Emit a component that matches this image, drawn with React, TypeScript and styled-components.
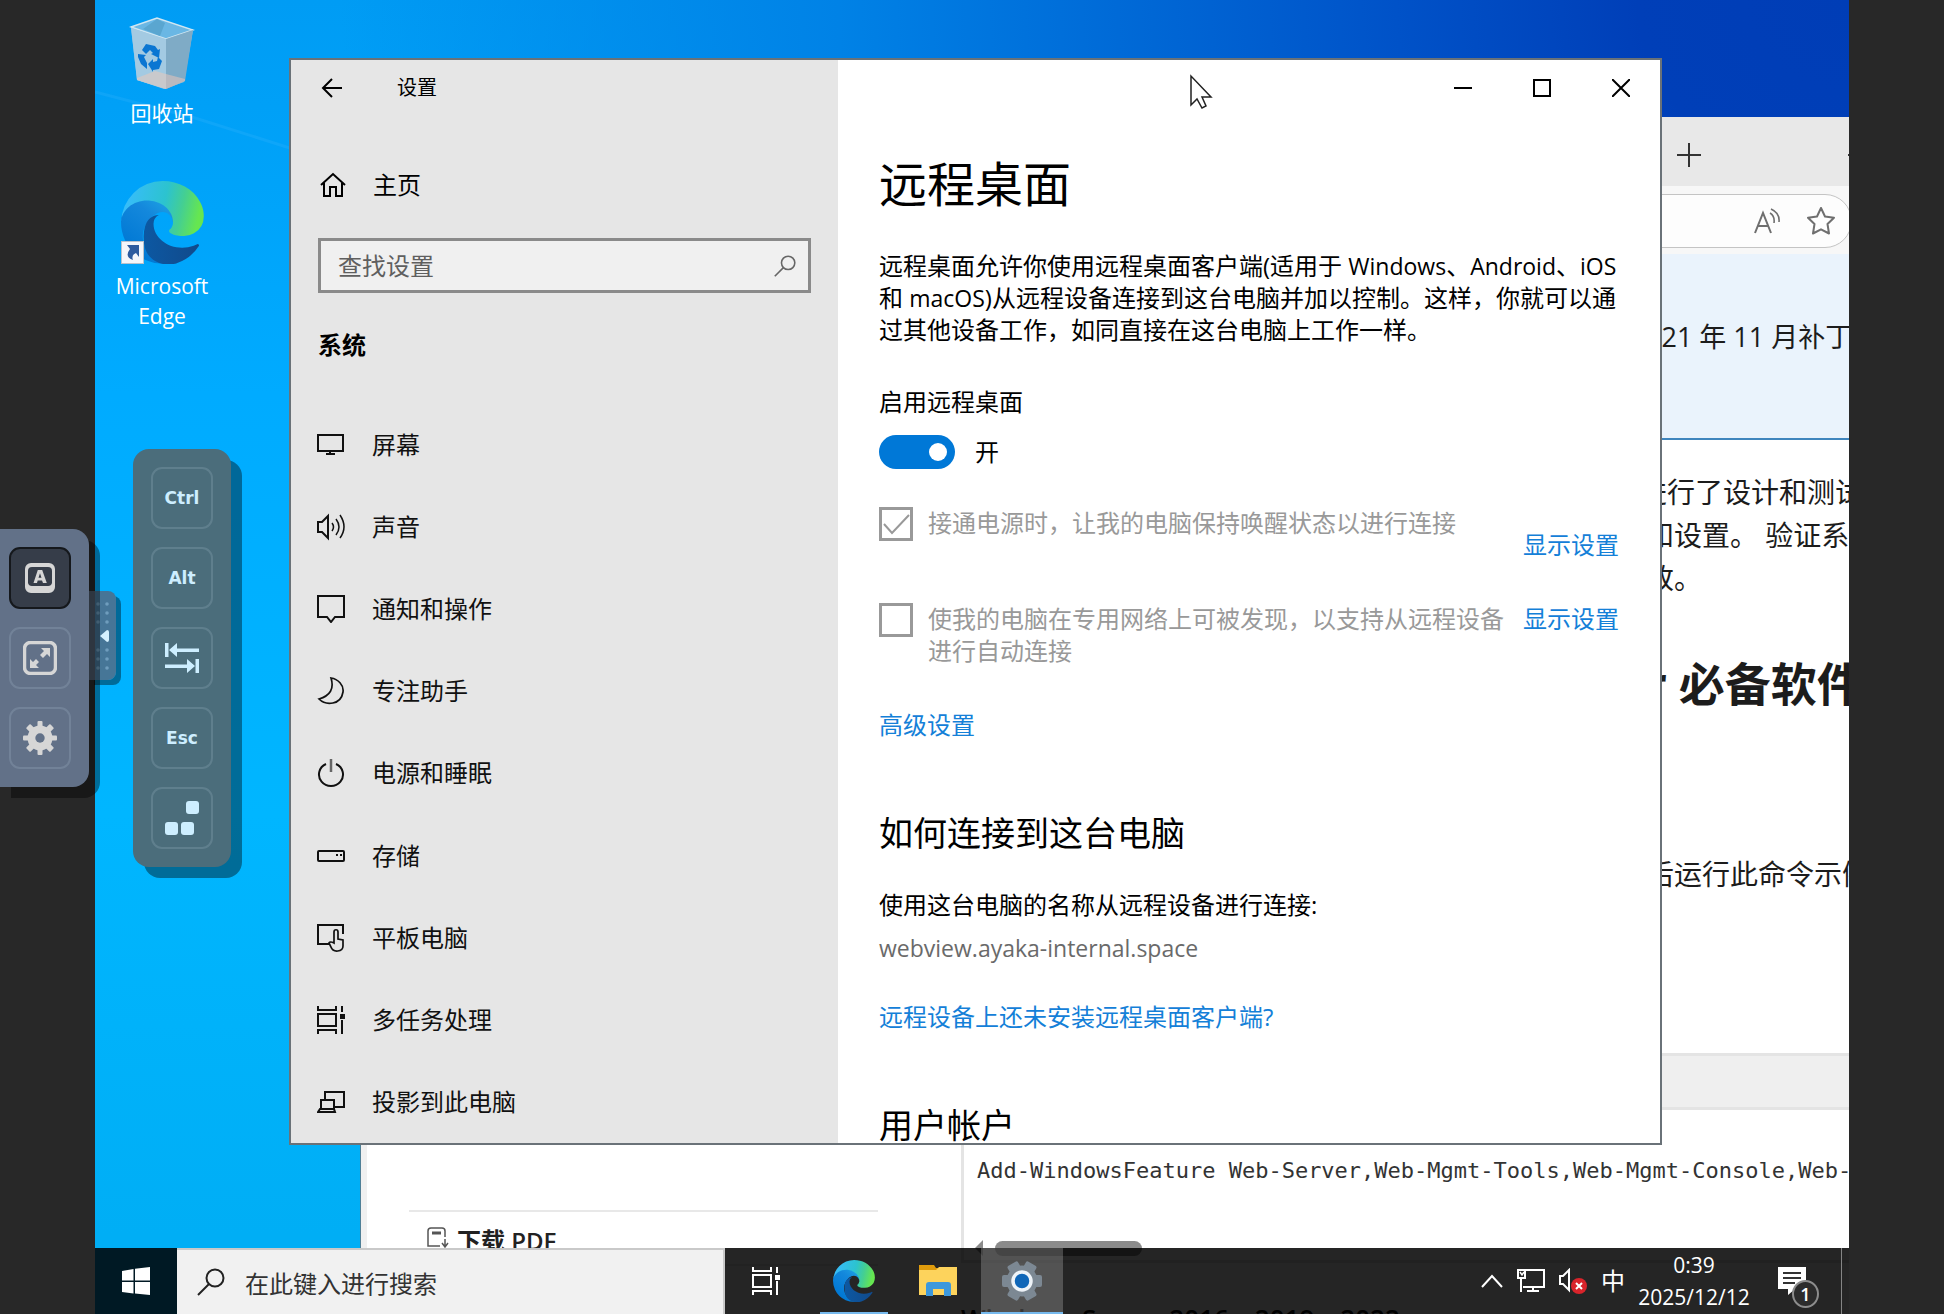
import React, { useId } from "react";
import styled, { createGlobalStyle, css } from "styled-components";

const uiFont = `"Open Sans", "Noto Sans CJK SC", sans-serif`;
const shadow = "rgba(0, 0, 0, 0.4)";

const GlobalStyle = createGlobalStyle`
  *, *::before, *::after { box-sizing: border-box; }
  body { margin: 0; background: #282828; font-family: ${uiFont}; }
  h1, h2, h3, p, ul { margin: 0; padding: 0; font-weight: 400; }
  ul { list-style: none; }
  button, input { font: inherit; color: inherit; margin: 0; }
  a { text-decoration: none; }
`;

/* ---------- Viewer shell ---------- */

const Viewer = styled.div`
  position: relative;
  display: flex;
  height: 100vh;
  padding: 0 95px;
  background: #282828;
  overflow: hidden;
`;

const Desktop = styled.main`
  position: relative;
  flex: 1;
  min-width: 0;
  overflow: hidden;
  background:
    radial-gradient(86% 100% at 100% 0, #003db6 0%, #003fb8 14%, #0052c8 30%, #0082e6 67%, rgba(0, 150, 240, 0) 100%),
    linear-gradient(180deg, #009cf4 0%, #00abff 30%, #00b6ff 62%, #00aef5 94%);
`;

const LightRay = styled.svg`
  position: absolute;
  left: 0;
  top: 80px;
`;

/* ---------- Desktop icons ---------- */

const Shortcuts = styled.ul`
  display: flex;
  flex-direction: column;
  gap: 53px;
  width: 134px;
  padding-top: 17px;
  position: relative;
`;

const Shortcut = styled.a`
  display: flex;
  flex-direction: column;
  align-items: center;
  gap: 7px;
  color: #fff;
  font-size: 21px;
  line-height: 30px;
  text-align: center;
`;

const ShortcutArt = styled.span`
  position: relative;
  display: block;
  line-height: 0;
`;

const ShortcutBadge = styled.svg`
  position: absolute;
  left: 0;
  bottom: 0;
`;

/* ---------- Remote control bars ---------- */

const ControlBar = styled.nav`
  position: absolute;
  left: 0;
  top: 50%;
  transform: translateY(-50%);
  display: flex;
  align-items: flex-start;
  padding-top: 2px;
  z-index: 5;
`;

const ControlPanel = styled.div`
  position: relative;
  z-index: 1;
  display: flex;
  flex-direction: column;
  gap: 18px;
  padding: 18px 18px 18px 9px;
  border-radius: 0 16px 16px 0;
  background: #627188;
  box-shadow: 11px 11px 0 ${shadow};
`;

const Handle = styled.button`
  display: flex;
  align-items: center;
  justify-content: center;
  width: 27px;
  height: 89px;
  margin-top: 62px;
  padding: 0;
  border: 0;
  border-radius: 0 8px 8px 0;
  background: rgba(88, 102, 125, 0.8);
  box-shadow: 5px 5px 0 ${shadow};
`;

const KeyPanel = styled.section`
  position: absolute;
  left: 133px;
  top: calc(50% + 1px);
  transform: translateY(-50%);
  display: flex;
  flex-direction: column;
  gap: 18px;
  padding: 18px;
  border-radius: 16px;
  background: #4b6d7b;
  box-shadow: 11px 11px 0 ${shadow};
  z-index: 4;
`;

const PadButton = styled.button<{ $active?: boolean }>`
  display: flex;
  align-items: center;
  justify-content: center;
  width: 62px;
  height: 62px;
  padding: 0;
  border: 2px solid rgba(190, 210, 225, 0.18);
  border-radius: 11px;
  background: transparent;
  color: #cdeeff;
  font: bold 17px "DejaVu Sans", sans-serif;
  ${(p) =>
    p.$active &&
    css`
      background: #363d49;
      border-color: #15181c;
    `}
`;

/* ---------- Browser window ---------- */

const BrowserWindow = styled.section`
  position: absolute;
  left: 265px;
  right: -60px;
  top: 117px;
  bottom: 0;
  display: flex;
  flex-direction: column;
  overflow: hidden;
  background: #fff;
  border-left: 1px solid #4f7f96;
`;

const TabStrip = styled.div`
  display: flex;
  align-items: center;
  justify-content: flex-end;
  gap: 147px;
  height: 69px;
  padding: 6px 44px 0 0;
  background: #e8e8e8;
  color: #333;
`;

const BareButton = styled.button`
  display: flex;
  align-items: center;
  justify-content: center;
  padding: 0;
  border: 0;
  background: none;
`;

const BrowserToolbar = styled.div`
  height: 68px;
  padding: 8px 57px 6px 60px;
  background: #f7f7f7;
`;

const AddressBar = styled.div`
  display: flex;
  align-items: center;
  justify-content: flex-end;
  gap: 26px;
  height: 54px;
  padding-right: 16px;
  border: 1px solid #c4c4c4;
  border-radius: 27px;
  background: #fdfdfd;
`;

const PageBody = styled.div`
  flex: 1;
  display: flex;
  min-height: 0;
  border-left: 6px solid #f0f0f0;
`;

const Contents = styled.aside`
  display: flex;
  flex-direction: column;
  justify-content: flex-end;
  width: 594px;
  padding: 0 83px 48px 42px;
`;

const DownloadRow = styled.a`
  display: flex;
  align-items: flex-start;
  gap: 8px;
  height: 56px;
  padding: 12px 0 0 18px;
  border-top: 2px solid #e8e8e8;
  border-bottom: 2px solid #e8e8e8;
  color: #222;
  font-size: 24px;
  line-height: 34px;
  font-weight: 600;
  svg {
    margin-top: 3px;
  }
`;

const Article = styled.article`
  flex: 1;
  min-width: 0;
  color: #1c1c1c;
  font-size: 28px;
  line-height: 43px;
  white-space: nowrap;
`;

const Notice = styled.div`
  display: flex;
  align-items: center;
  height: 186px;
  padding: 0 0 20px 685px;
  border-bottom: 2px solid #3f85bd;
  background: #eaf3fc;
  font-size: 27px;
`;

const Prose = styled.div`
  display: flex;
  flex-direction: column;
  height: 613px;
  padding: 31px 0 0 678px;
`;

const Indented = styled.div`
  padding-left: 7px;
`;

const ProseHeading = styled.h2`
  margin: 53px 0 140px;
  font-size: 46px;
  line-height: 60px;
  font-weight: 700;
`;

const CodeHeader = styled.div`
  height: 57px;
  border: 3px solid #e4e4e4;
  background: #efefef;
`;

const CodeBlock = styled.div`
  display: flex;
  flex-direction: column;
  justify-content: space-between;
  height: 153px;
  padding: 44px 0 4px;
  border: solid #e4e4e4;
  border-width: 0 0 3px 3px;
`;

const Code = styled.code`
  padding-left: 13px;
  font: 22px/34px "DejaVu Sans Mono", monospace;
  color: #333;
`;

const ScrollTrack = styled.div`
  display: flex;
  align-items: center;
  gap: 11px;
  padding-left: 11px;
`;

const ScrollThumb = styled.div`
  width: 147px;
  height: 15px;
  border-radius: 8px;
  background: #8b8b8b;
`;

const CaptionText = styled.h3`
  padding-top: 34px;
  font-size: 26px;
  line-height: 43px;
  font-weight: 600;
  color: #000;
`;

/* ---------- Settings window ---------- */

const SettingsWindow = styled.section`
  position: absolute;
  left: 194px;
  right: 187px;
  top: 58px;
  bottom: 169px;
  display: grid;
  grid-template-columns: 547px minmax(0, 1fr);
  overflow: hidden;
  border: 2px solid #6a7278;
  background: #fff;
  color: #000;
  font-size: 24px;
  line-height: 32px;
`;

const Sidebar = styled.aside`
  display: flex;
  flex-direction: column;
  min-height: 0;
  background: #e6e6e6;
`;

const SidebarTitle = styled.header`
  display: flex;
  align-items: center;
  gap: 54px;
  height: 56px;
  padding: 0 30px;
  font-size: 20px;
`;

const HomeLink = styled.a`
  display: flex;
  align-items: center;
  gap: 27px;
  height: 50px;
  margin-top: 44px;
  padding: 0 29px;
  color: inherit;
`;

const SettingSearch = styled.label`
  display: flex;
  align-items: center;
  justify-content: space-between;
  height: 55px;
  margin: 28px 27px 0;
  padding: 0 12px 0 17px;
  border: 3px solid #8a8a8a;
  background: #f0f0f0;
`;

const PlainInput = styled.input`
  flex: 1;
  min-width: 0;
  padding: 0;
  border: 0;
  outline: 0;
  background: transparent;
  line-height: 32px;
  &::placeholder {
    color: #5f5f5f;
    opacity: 1;
  }
`;

const GroupTitle = styled.h2`
  padding: 36px 27px 43px;
  font-size: 24px;
  line-height: 32px;
  font-weight: 700;
`;

const NavList = styled.ul`
  flex: 1;
  display: flex;
  flex-direction: column;
  min-height: 0;
`;

const NavItem = styled.li`
  flex: 1;
  display: flex;
`;

const NavLink = styled.a`
  flex: 1;
  display: flex;
  align-items: center;
  gap: 27px;
  padding: 0 26px;
  color: #111;
`;

const Content = styled.div`
  display: flex;
  flex-direction: column;
  min-height: 0;
  overflow: hidden;
`;

const WindowButtons = styled.div`
  display: flex;
  justify-content: flex-end;
  height: 56px;
  flex: none;
`;

const WindowButton = styled(BareButton)`
  width: 79px;
  height: 56px;
`;

const Pane = styled.div`
  display: flex;
  flex-direction: column;
  align-items: flex-start;
  padding: 0 38px 0 41px;
`;

const PageTitle = styled.h1`
  padding-top: 36px;
  font-size: 48px;
  line-height: 64px;
`;

const Description = styled.p`
  margin-top: 34px;
  white-space: nowrap;
`;

const Latin = styled.span`
  font-size: 23px;
`;

const FieldLabel = styled.label`
  margin-top: 40px;
`;

const ToggleRow = styled.div`
  display: flex;
  align-items: center;
  gap: 20px;
  height: 36px;
  margin-top: 16px;
`;

const Toggle = styled.input`
  appearance: none;
  position: relative;
  width: 76px;
  height: 34px;
  border-radius: 17px;
  background: #0078d7;
  &::after {
    content: "";
    position: absolute;
    right: 8px;
    top: 8px;
    width: 18px;
    height: 18px;
    border-radius: 50%;
    background: #fff;
  }
`;

const OptionGrid = styled.div`
  display: grid;
  grid-template-columns: 34px 595px auto;
  grid-auto-rows: 96px;
  column-gap: 15px;
  align-items: start;
  margin-top: 37px;
`;

const OptionLabel = styled.label`
  width: 580px;
  color: #999;
`;

const CheckCell = styled.span`
  display: grid;
  width: 34px;
  height: 34px;
  > * {
    grid-area: 1 / 1;
  }
`;

const CheckBox = styled.input`
  appearance: none;
  width: 34px;
  height: 34px;
  border: 3px solid #999;
  background: #fff;
`;

const TextLink = styled.a`
  color: #1480d8;
`;

const OptionLink = styled(TextLink)<{ $low?: boolean }>`
  margin-left: -15px;
  padding-top: ${(p) => (p.$low ? "22px" : "0")};
`;

const SectionTitle = styled.h2`
  margin-top: 69px;
  font-size: 34px;
  line-height: 46px;
`;

const AdvancedLink = styled(TextLink)`
  margin-top: 10px;
`;

const HostPrompt = styled.p`
  margin-top: 33px;
`;

const HostName = styled.p`
  margin-top: 11px;
  color: #6a6a6a;
`;

const ClientLink = styled(TextLink)`
  margin-top: 37px;
`;

const Pointer = styled.svg`
  position: absolute;
  left: calc(62% + 7px);
  top: 74px;
`;

/* ---------- Taskbar ---------- */

const Taskbar = styled.footer`
  position: absolute;
  left: 0;
  right: 0;
  bottom: 0;
  display: flex;
  height: 66px;
  background: rgba(0, 0, 0, 0.855);
  color: #fff;
`;

const TaskButton = styled(BareButton)<{ $open?: boolean; $focused?: boolean }>`
  position: relative;
  width: 82px;
  height: 66px;
  background: ${(p) => (p.$focused ? "rgba(255, 255, 255, 0.21)" : "transparent")};
  ${(p) =>
    p.$open &&
    css`
      &::after {
        content: "";
        position: absolute;
        bottom: 0;
        left: ${p.$focused ? "0" : "7px"};
        right: ${p.$focused ? "0" : "7px"};
        height: 2px;
        background: #76b9ed;
      }
    `}
`;

const TaskSearch = styled.label`
  display: flex;
  align-items: center;
  gap: 20px;
  width: 548px;
  padding: 4px 20px 0;
  border: solid #c9c9c9;
  border-width: 2px 2px 0 0;
  background: #f1f1f1;
  color: #222;
  font-size: 24px;
  svg {
    margin-bottom: 4px;
  }
  ${PlainInput}::placeholder {
    color: #333;
  }
`;

const Apps = styled.div`
  display: flex;
  gap: 2px;
  margin-left: 6px;
`;

const Tray = styled.div`
  display: flex;
  align-items: center;
  margin-left: auto;
`;

const TrayIcons = styled.div`
  display: flex;
  align-items: center;
  gap: 14px;
  font-size: 24px;
  line-height: 32px;
`;

const Clock = styled.time`
  width: 138px;
  font-size: 21px;
  line-height: 32px;
  text-align: center;
`;

const Notifications = styled(BareButton)`
  position: relative;
  justify-content: flex-start;
  width: 78px;
  height: 66px;
  padding-left: 15px;
`;

const Count = styled.span`
  position: absolute;
  left: 29px;
  top: 32px;
  width: 27px;
  height: 28px;
  border: 2px solid #8d8d8d;
  border-radius: 50%;
  background: #2c2c2c;
  font-size: 18px;
  line-height: 24px;
  font-weight: 600;
`;

const ShowDesktop = styled(BareButton)`
  width: 8px;
  height: 66px;
  border-left: 1px solid #858585;
`;

/* ---------- Drawings ---------- */

const EdgeLogo = ({ w, h }: { w: number; h: number }) => {
  const id = useId().replace(/[^a-zA-Z0-9]/g, "");
  return (
    <svg width={w} height={h} viewBox="0 0 257 257" preserveAspectRatio="none">
      <defs>
        <linearGradient id={id + "a"} x1="60" y1="180" x2="240" y2="180" gradientUnits="userSpaceOnUse">
          <stop offset="0" stopColor="#0c59a4" />
          <stop offset="1" stopColor="#114a8b" />
        </linearGradient>
        <linearGradient id={id + "b"} x1="150" y1="80" x2="40" y2="220" gradientUnits="userSpaceOnUse">
          <stop offset="0" stopColor="#1b9de2" />
          <stop offset="0.3" stopColor="#1488dc" />
          <stop offset="1" stopColor="#0078d4" />
        </linearGradient>
        <linearGradient id={id + "c"} x1="20" y1="60" x2="240" y2="110" gradientUnits="userSpaceOnUse">
          <stop offset="0" stopColor="#37bdf8" />
          <stop offset="0.5" stopColor="#2cc3cf" />
          <stop offset="0.75" stopColor="#44cf92" />
          <stop offset="1" stopColor="#66e650" />
        </linearGradient>
      </defs>
      <path fill={`url(#${id}b)`} d="M105.7 241.4a79.2 79.2 0 01-22.7-21.4 80.7 80.7 0 0129.5-120c3.2-1.5 8.5-4.1 15.6-4a32.4 32.4 0 0125.7 13 31.9 31.9 0 016.3 18.7c0-.2 24.5-79.6-80-79.6-43.9 0-80 41.7-80 78.2a130.2 130.2 0 0012.1 56 128 128 0 00156.4 67 75.5 75.5 0 01-62.8-8z" />
      <path fill={`url(#${id}a)`} d="M235.7 195.5a93.7 93.7 0 01-10.6 4.7 101.9 101.9 0 01-35.9 6.4c-47.3 0-88.5-32.5-88.5-74.3a31.5 31.5 0 0116.4-27.3c-42.8 1.8-46.8 46.4-46.8 72.5 0 73.9 61.1 81.4 75.8 81.4 7.9 0 19.8-2.3 27-4.6l1.3-.4a128.3 128.3 0 0066.6-52.8 4 4 0 00-5.3-5.6z" />
      <path fill={`url(#${id}c)`} d="M152.3 148.9c-.9 1-3.4 2.5-3.4 5.6 0 2.6 1.7 5.2 4.8 7.3 14.4 10.1 41.7 8.7 41.8 8.7a59.6 59.6 0 0030.4-8.4A61.8 61.8 0 00256.3 108.9c.3-22.4-8-37.3-11.3-43.9C223.9 23.9 178.6 0 129.1 0A128 128 0 001 126.2c.5-36.5 36.8-66 80-66 3.5 0 23.5.3 42 10a72.6 72.6 0 0130.9 29.3c6.1 10.6 7.2 24.1 7.2 29.4s-2.7 13.2-7.8 19.9z" />
    </svg>
  );
};

const RecycleBin = () => (
  <svg width="66" height="74" viewBox="0 0 66 74">
    <path d="M2 10L28 1l36 12-9 52-20 7-27-9z" fill="#8fc4e4" />
    <path d="M2 10L28 1l36 12-27 9z" fill="#6ab7e4" stroke="#cfe6f2" strokeWidth="1.5" />
    <path d="M14 12l14-10 8 4-5 13z" fill="#5aa6d0" />
    <path d="M2 11l35 11v50L8 63z" fill="#a3cae2" />
    <path d="M37 22l27-9-8 51-19 8z" fill="#7fabc6" />
    <path d="M8 61l18-7 11 3v15L8 63z" fill="#c9c9cc" />
    <path d="M37 57l19 5v2l-19 8z" fill="#b9b9bf" />
    <g fill="#0a76d2">
      <path d="M13 33l4-6 9 2 3 4 2-1-1 9-8-4 2-1-3-3-4 4z" />
      <path d="M9 37l8 1-2 2 3 6v6l-6-5-3-7z" />
      <path d="M19 47l5-5v3l4-1 1-4 4 4-3 8-6 1v2z" />
    </g>
  </svg>
);

const line = (w: number, h: number, children: React.ReactNode, sw = 2) => (
  <svg width={w} height={h} viewBox={`0 0 ${w} ${h}`} fill="none" stroke="currentColor" strokeWidth={sw}>
    {children}
  </svg>
);

const BackArrow = () => line(22, 22, <path d="M21 11H2M11 2L2 11l9 9" />);
const HomeIcon = () => line(26, 26, <path d="M1 13L13 2l12 11M4 11v13h6v-9h6v9h6V11" />);
const TaskViewIcon = () => (
  <svg width="28" height="28" viewBox="0 0 28 28" fill="none" stroke="currentColor" strokeWidth="2">
    <path d="M1 0v4h18V0M1 28v-4h18v4M1 8h18v12H1zM25 0v6M25 14v14" />
    <path d="M23 8h5v5h-5z" fill="currentColor" stroke="none" />
  </svg>
);

const navItems: { label: string; icon: React.ReactNode }[] = [
  {
    label: "屏幕",
    icon: line(28, 28, <path d="M1 4h25v16H1zM13 20v3M9 23h9" />),
  },
  {
    label: "声音",
    icon: line(28, 28, <>
      <path d="M1 9h4l6-6v22l-6-6H1z" />
      <path d="M15 10q3 4 0 8M19 6q6 8 0 16M23 2q8 12 0 23" strokeWidth="1.5" />
    </>),
  },
  {
    label: "通知和操作",
    icon: line(28, 28, <path d="M1 1h26v21h-9l-4 5-4-5H1z" />),
  },
  {
    label: "专注助手",
    icon: line(28, 28, <path d="M14 1q5 16-12 21c7 7 22 6 24-7 1-7-5-13-12-14z" strokeWidth="1.7" />),
  },
  {
    label: "电源和睡眠",
    icon: line(28, 28, <>
      <path d="M9 5a12 11.5 0 1 0 10 0" />
      <path d="M14 0v13" stroke="#666" strokeWidth="2.5" />
    </>),
  },
  {
    label: "存储",
    icon: line(28, 28, <>
      <rect x="1" y="9" width="26" height="10" rx="1" />
      <path d="M19 13h2M23 13h2" />
    </>),
  },
  {
    label: "平板电脑",
    icon: line(28, 28, <>
      <path d="M12 20H1V1h25v9" />
      <path d="M17 19V8c0-3 4-3 4 0v7l5 1v6c0 6-10 7-12 1l-2-4c1-2 3-1 5 0z" strokeWidth="1.7" />
    </>),
  },
  { label: "多任务处理", icon: <TaskViewIcon /> },
  {
    label: "投影到此电脑",
    icon: line(28, 28, <path d="M8 11V4h19v15H17M4 21V12h13v9M1 24h17l-1-3H3z" />),
  },
];

const Magnifier = ({ size, dark }: { size: number; dark?: boolean }) => (
  <svg width={size} height={size} viewBox="0 0 28 28" fill="none" stroke={dark ? "#222" : "#666"} strokeWidth="2">
    <circle cx="18" cy="10" r="8.5" />
    <path d="M12 16L1 27" />
  </svg>
);

const KeyboardA = () => (
  <svg width="30" height="30" viewBox="0 0 30 30">
    <path fillRule="evenodd" fill="#d6d6d6" d="M6 0h18a6 6 0 016 6v18a6 6 0 01-6 6H6a6 6 0 01-6-6V6a6 6 0 016-6zM7 4a4 4 0 00-4 4v12a4 4 0 004 3h16a4 4 0 004-3V8a4 4 0 00-4-4z" />
    <path fillRule="evenodd" fill="#d6d6d6" d="M12.800 7h4.400l4.600 13h-3.800l-1-2.600h-4.300L12 20H8.500zM15 10.200l-1.500 4.600h3z" />
  </svg>
);

const FullScreen = () => (
  <svg width="34" height="34" viewBox="0 0 34 34">
    <rect x="1.500" y="1.500" width="31" height="31" rx="6" fill="none" stroke="#d6d6d6" strokeWidth="3.500" />
    <path fill="#d6d6d6" d="M18 7h9v9l-3-3-4 4-3-3 4-4zM16 27H7v-9l3 3 3-3 3 3-3 3z" />
  </svg>
);

const Gear = () => (
  <svg width="34" height="34" viewBox="-17 -17 34 34">
    <g fill="#d6d6d6">
      {[0, 45, 90, 135].map((a) => (
        <rect key={a} x={a % 90 ? -3 : -2.5} y="-17" width={a % 90 ? 6 : 5} height="34" rx="1" transform={`rotate(${a})`} />
      ))}
      <circle r="12.500" />
    </g>
    <circle r="4.700" fill="#627188" />
  </svg>
);

const TabKeys = () => (
  <svg width="34" height="32" viewBox="0 0 34 32" fill="#cdeeff">
    <path d="M0 1h3.500v14H0zM4 8l8-7v5.500h22v3.500H12V15zM30.500 17H34v14h-3.500zM30 24l-8-7v5.500H0V26h22v5z" />
  </svg>
);

const ExtraKeys = () => (
  <svg width="34" height="34" viewBox="0 0 34 34" fill="#cdeeff">
    <rect x="21" y="0" width="13" height="13" rx="3" />
    <rect x="0" y="21" width="13" height="13" rx="3" />
    <rect x="16" y="21" width="13" height="13" rx="3" />
  </svg>
);

const HandleGrip = () => (
  <svg width="27" height="89" viewBox="0 0 27 89">
    {[13, 22, 31, 59, 68, 77].map((y) => (
      <g key={y} fill="#6f9dbd">
        <circle cx="9" cy={y} r="1.800" />
        <circle cx="18" cy={y} r="1.800" />
      </g>
    ))}
    <path d="M11 45l7-6q2 0 2 2v8q0 2-2 2z" fill="#d3f0ff" />
  </svg>
);

const Folder = () => (
  <svg width="38" height="32" viewBox="0 0 38 32">
    <path d="M0 0h15l2 3h21v6H0z" fill="#e09c0c" />
    <path d="M0 5h17l3-3h18v28H0z" fill="#fdd35c" />
    <path d="M7 31V20q0-3 3-3h19q3 0 3 3v11h-7v-7H14v7z" fill="#3d98dc" />
  </svg>
);

const SettingsCog = () => (
  <svg width="42" height="40" viewBox="-21 -20 42 40">
    <g fill="#7c8893">
      {[30, 90, 150].map((a) => (
        <rect key={a} x="-6" y="-20" width="12" height="40" rx="2" transform={`rotate(${a})`} />
      ))}
      <circle r="15.500" />
    </g>
    <circle r="9" fill="#0f66b8" stroke="#eef3f8" strokeWidth="3.500" />
  </svg>
);

/* ---------- Screens ---------- */

const Browser = () => (
  <BrowserWindow>
    <TabStrip>
      <BareButton aria-label="新建标签页">{line(24, 24, <path d="M0 12h24M12 0v24" />)}</BareButton>
      <BareButton aria-label="最小化窗口">{line(17, 2, <path d="M0 1h17" />)}</BareButton>
    </TabStrip>
    <BrowserToolbar>
      <AddressBar>
        <BareButton aria-label="朗读此页">
          <svg width="27" height="26" viewBox="0 0 27 26" fill="none" stroke="#6f6f6f" strokeWidth="2">
            <path d="M1 25L9 5l8 20M4 18h10" />
            <path d="M16 5q5 3 4 10M17 1q9 4 8 13" strokeWidth="1.600" />
          </svg>
        </BareButton>
        <BareButton aria-label="收藏此页">
          <svg width="28" height="28" viewBox="0 0 28 28" fill="none" stroke="#6f6f6f" strokeWidth="2" strokeLinejoin="round">
            <path d="M14 1l4 8.500 9 1.200-6.500 6.300L22 26.500l-8-4.200-8 4.200 1.500-9.500L1 10.700l9-1.200z" />
          </svg>
        </BareButton>
      </AddressBar>
    </BrowserToolbar>
    <PageBody>
      <Contents>
        <DownloadRow href="#pdf">
          <svg width="22" height="24" viewBox="0 0 22 24" fill="none" stroke="#555" strokeWidth="1.500">
            <path d="M18 10V4q0-3-3-3H4Q1 1 1 4v15h12M1 23h12M14 23h8M18 12v7M15 16l3 4 3-4" />
            <path d="M5 6h9" strokeWidth="3" />
          </svg>
          下载 PDF
        </DownloadRow>
      </Contents>
      <Article>
        <Notice>021 年 11 月补丁</Notice>
        <Prose>
          <p>进行了设计和测试</p>
          <Indented>
            <p>和设置。 验证系统</p>
            <p>改。</p>
            <ProseHeading>r 必备软件</ProseHeading>
            <p>后运行此命令示例</p>
          </Indented>
        </Prose>
        <CodeHeader />
        <CodeBlock>
          <Code>Add-WindowsFeature Web-Server,Web-Mgmt-Tools,Web-Mgmt-Console,Web-W</Code>
          <ScrollTrack>
            <svg width="9" height="16" viewBox="0 0 9 16">
              <path d="M8 0v16L0 8z" fill="#8b8b8b" />
            </svg>
            <ScrollThumb />
          </ScrollTrack>
        </CodeBlock>
        <CaptionText>Windows Server 2016、2019、2022</CaptionText>
      </Article>
    </PageBody>
  </BrowserWindow>
);

const Settings = () => (
  <SettingsWindow>
    <Sidebar>
      <SidebarTitle>
        <BareButton aria-label="返回"><BackArrow /></BareButton>
        <span>设置</span>
      </SidebarTitle>
      <HomeLink href="#home"><HomeIcon />主页</HomeLink>
      <SettingSearch>
        <PlainInput type="text" placeholder="查找设置" aria-label="查找设置" />
        <Magnifier size={22} />
      </SettingSearch>
      <GroupTitle>系统</GroupTitle>
      <NavList>
        {navItems.map((item) => (
          <NavItem key={item.label}>
            <NavLink href="#system">{item.icon}{item.label}</NavLink>
          </NavItem>
        ))}
      </NavList>
    </Sidebar>
    <Content>
      <WindowButtons>
        <WindowButton aria-label="最小化">{line(18, 18, <path d="M0 9h18" />)}</WindowButton>
        <WindowButton aria-label="最大化">{line(18, 18, <path d="M1 1h16v16H1z" />)}</WindowButton>
        <WindowButton aria-label="关闭">{line(18, 18, <path d="M0 0l18 18M18 0L0 18" />)}</WindowButton>
      </WindowButtons>
      <Pane>
        <PageTitle>远程桌面</PageTitle>
        <Description>
          远程桌面允许你使用远程桌面客户端(适用于 <Latin>Windows</Latin>、<Latin>Android</Latin>、<Latin>iOS</Latin><br />
          和 <Latin>macOS</Latin>)从远程设备连接到这台电脑并加以控制。这样，你就可以通<br />
          过其他设备工作，如同直接在这台电脑上工作一样。
        </Description>
        <FieldLabel htmlFor="enable">启用远程桌面</FieldLabel>
        <ToggleRow>
          <Toggle id="enable" type="checkbox" role="switch" defaultChecked />
          <span>开</span>
        </ToggleRow>
        <OptionGrid>
          <CheckCell>
            <CheckBox id="awake" type="checkbox" defaultChecked disabled />
            <svg width="34" height="34" viewBox="0 0 34 34" fill="none" stroke="#999" strokeWidth="2">
              <path d="M5 17l8 9L30 8" />
            </svg>
          </CheckCell>
          <OptionLabel htmlFor="awake">接通电源时，让我的电脑保持唤醒状态以进行连接</OptionLabel>
          <OptionLink href="#power" $low>显示设置</OptionLink>
          <CheckCell>
            <CheckBox id="discover" type="checkbox" disabled />
          </CheckCell>
          <OptionLabel htmlFor="discover">使我的电脑在专用网络上可被发现，以支持从远程设备进行自动连接</OptionLabel>
          <OptionLink href="#network">显示设置</OptionLink>
        </OptionGrid>
        <AdvancedLink href="#advanced">高级设置</AdvancedLink>
        <SectionTitle>如何连接到这台电脑</SectionTitle>
        <HostPrompt>使用这台电脑的名称从远程设备进行连接:</HostPrompt>
        <HostName><Latin>webview.ayaka-internal.space</Latin></HostName>
        <ClientLink href="#client">远程设备上还未安装远程桌面客户端?</ClientLink>
        <SectionTitle>用户帐户</SectionTitle>
      </Pane>
    </Content>
  </SettingsWindow>
);

const SystemTaskbar = () => (
  <Taskbar>
    <TaskButton aria-label="开始">
      <svg width="28" height="28" viewBox="0 0 28 28" fill="#fff">
        <path d="M0 4l11.500-2v11.500H0zM13 1.800L28 0v13.500H13zM0 15h11.500v11.500L0 25zM13 15h15v13l-15-1.500z" />
      </svg>
    </TaskButton>
    <TaskSearch>
      <Magnifier size={28} dark />
      <PlainInput type="text" placeholder="在此键入进行搜索" aria-label="搜索" />
    </TaskSearch>
    <TaskButton aria-label="任务视图"><TaskViewIcon /></TaskButton>
    <Apps>
      <TaskButton aria-label="Microsoft Edge" $open><EdgeLogo w={42} h={42} /></TaskButton>
      <TaskButton aria-label="文件资源管理器"><Folder /></TaskButton>
      <TaskButton aria-label="设置" $open $focused><SettingsCog /></TaskButton>
    </Apps>
    <Tray>
      <TrayIcons>
        <BareButton aria-label="显示隐藏的图标">{line(22, 14, <path d="M1 13L11 2l10 11" />)}</BareButton>
        <BareButton aria-label="网络">
          {line(28, 24, <>
            <path d="M9 1h18v17H6M1 1h7v8H1zM4 9v14M16 18v4M10 22h12" />
            <path d="M3 3l2 3 2-3" strokeWidth="1.500" />
          </>)}
        </BareButton>
        <BareButton aria-label="音量">
          <svg width="28" height="26" viewBox="0 0 28 26" fill="none" stroke="#fff" strokeWidth="2">
            <path d="M1 8h3l6-6v20l-6-6H1z" />
            <circle cx="20" cy="18" r="8" fill="#d9242b" stroke="none" />
            <path d="M17 15l6 6M23 15l-6 6" />
          </svg>
        </BareButton>
        <BareButton aria-label="输入法">中</BareButton>
      </TrayIcons>
      <Clock>0:39<br />2025/12/12</Clock>
      <Notifications aria-label="通知">
        <svg width="28" height="28" viewBox="0 0 28 28">
          <path d="M0 0h28v22H17l-7 6v-6H0z" fill="#fff" />
          <path d="M5 6h18M5 11h18M5 16h12" stroke="#333" strokeWidth="2" />
        </svg>
        <Count>1</Count>
      </Notifications>
      <ShowDesktop aria-label="显示桌面" />
    </Tray>
  </Taskbar>
);

export default function App() {
  return (
    <Viewer>
      <GlobalStyle />
      <Desktop>
        <LightRay width="195" height="80" fill="none" stroke="#5cc4ff" strokeOpacity="0.15" strokeWidth="3">
          <path d="M0 12L100 38L195 68" />
        </LightRay>
        <Shortcuts>
          <li>
            <Shortcut href="#bin"><RecycleBin />回收站</Shortcut>
          </li>
          <li>
            <Shortcut href="#edge">
              <ShortcutArt>
                <EdgeLogo w={83} h={83} />
                <ShortcutBadge width="23" height="23" viewBox="0 0 23 23">
                  <rect x="0.500" y="0.500" width="22" height="22" fill="#f4f6fa" stroke="#b9c2cc" />
                  <path d="M6 4h12v12l-3-4q-5 2-3 7-9-3-3-11z" fill="#2d5b9e" />
                </ShortcutBadge>
              </ShortcutArt>
              <span>Microsoft<br />Edge</span>
            </Shortcut>
          </li>
        </Shortcuts>
        <Browser />
        <Settings />
        <Pointer width="24" height="36" viewBox="0 0 24 36" fill="#fff" stroke="#222" strokeWidth="1.500">
          <path d="M2 2v29l6-6 5 9 4-2-4-9h9z" />
        </Pointer>
        <SystemTaskbar />
      </Desktop>
      <ControlBar>
        <ControlPanel>
          <PadButton $active aria-label="额外按键"><KeyboardA /></PadButton>
          <PadButton aria-label="全屏"><FullScreen /></PadButton>
          <PadButton aria-label="选项"><Gear /></PadButton>
        </ControlPanel>
        <Handle aria-label="隐藏控制栏"><HandleGrip /></Handle>
      </ControlBar>
      <KeyPanel>
        <PadButton>Ctrl</PadButton>
        <PadButton>Alt</PadButton>
        <PadButton aria-label="Tab"><TabKeys /></PadButton>
        <PadButton>Esc</PadButton>
        <PadButton aria-label="Ctrl+Alt+Del"><ExtraKeys /></PadButton>
      </KeyPanel>
    </Viewer>
  );
}
